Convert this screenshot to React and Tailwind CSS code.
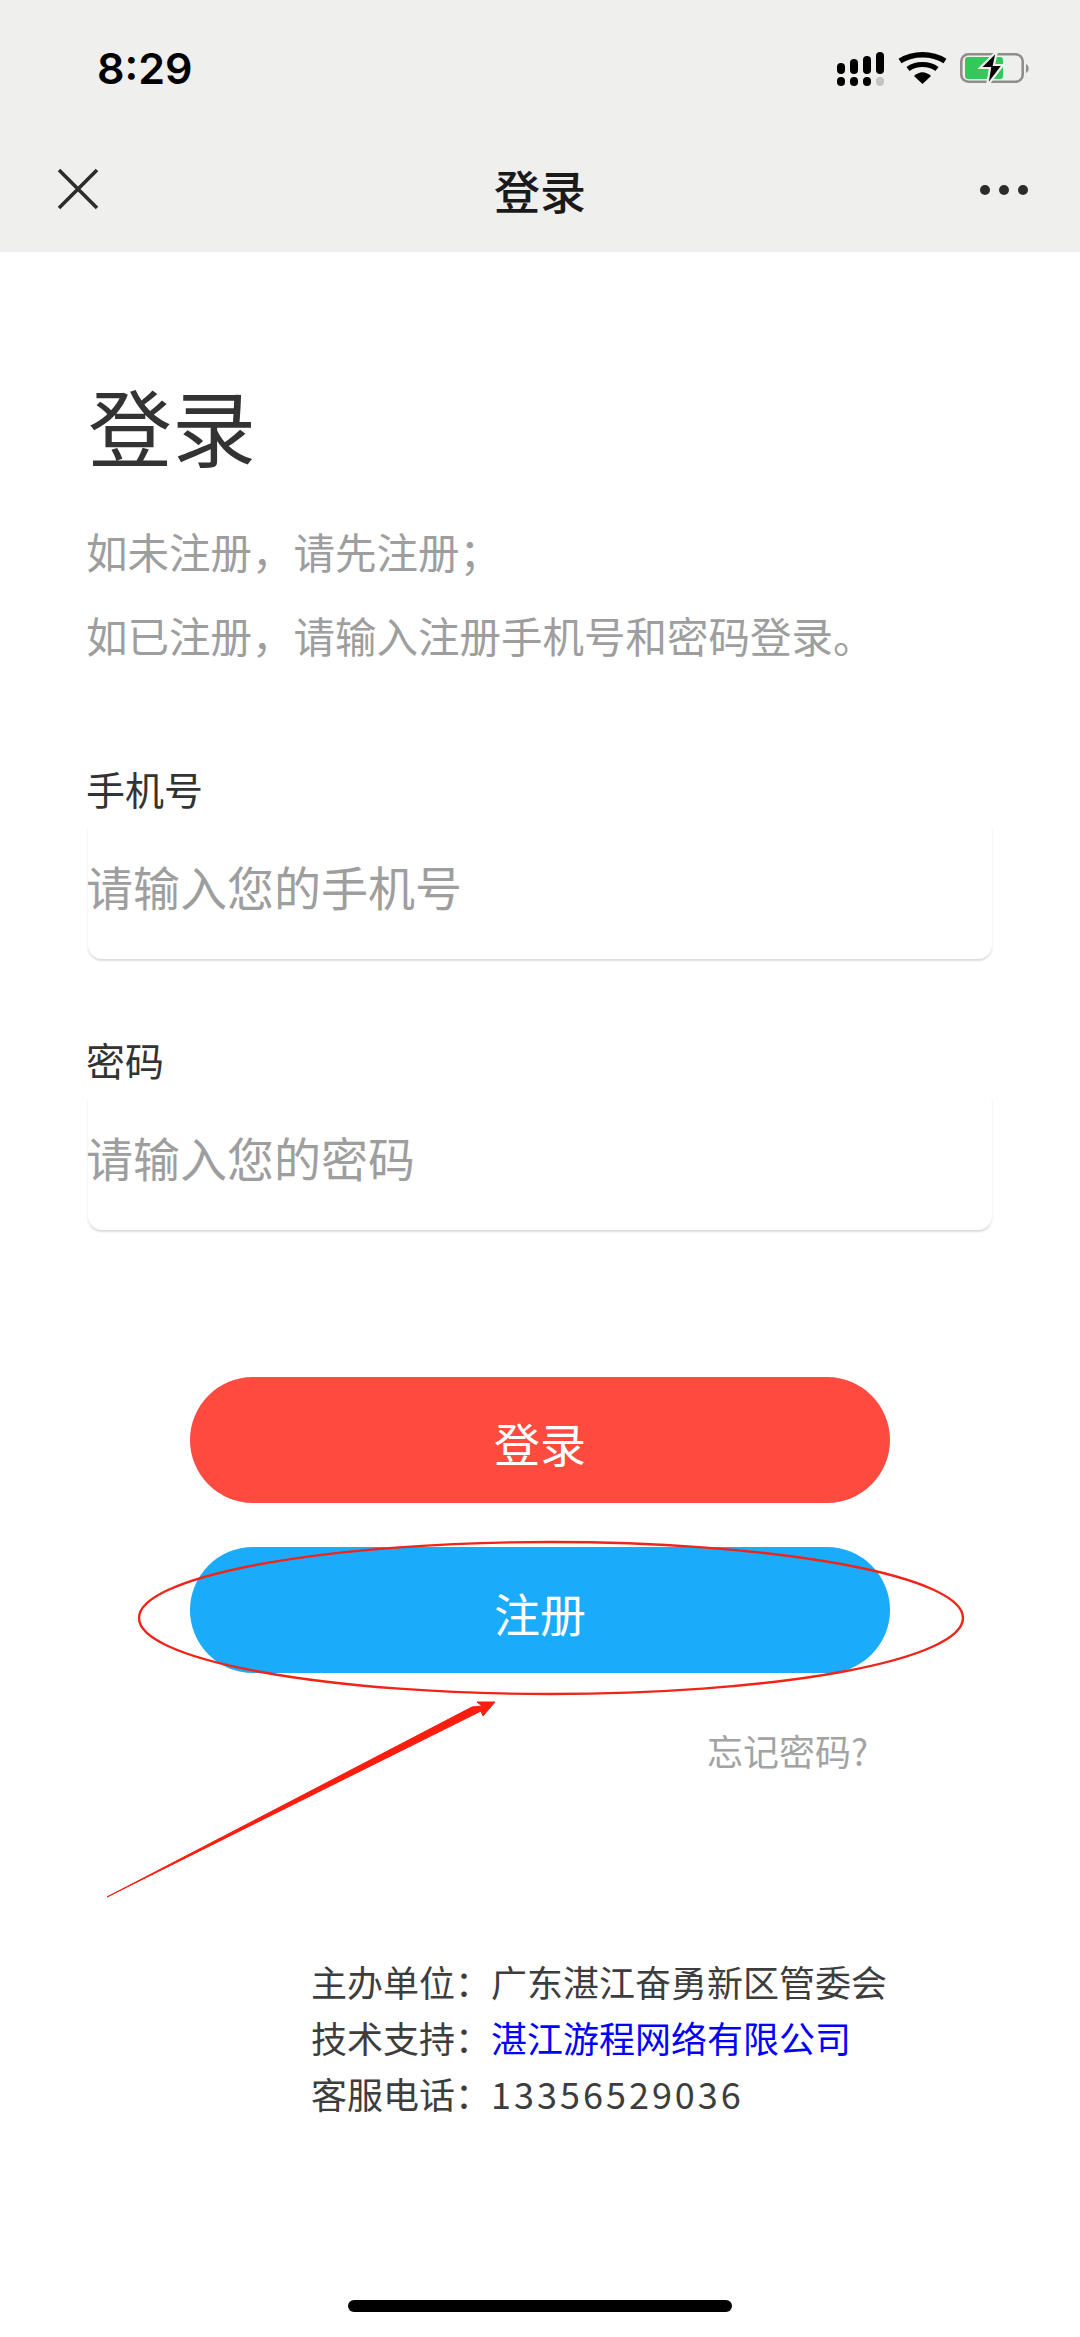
import React from 'react';

const cjk = { fontFamily: '"Noto Sans CJK SC", "Noto Sans", sans-serif' };

// status bar glyphs, cellular + wifi + charging battery
const StatusIcons = () => (
    <svg width="196" height="38" viewBox="0 0 196 38" className="block">
        <g fill="#000" transform="translate(0 3)">
            <rect x="0" y="11" width="8" height="11" rx="4" />
            <rect x="13" y="7" width="8" height="15" rx="4" />
            <rect x="26" y="4" width="8" height="18" rx="4" />
            <rect x="39" y="0" width="8" height="22" rx="4" />
            <rect x="0" y="25" width="8" height="9" rx="4" />
            <rect x="13" y="25" width="8" height="9" rx="4" />
            <rect x="26" y="25" width="8" height="9" rx="4" />
            <rect x="39" y="25" width="8" height="9" rx="4" fill="#c4c4c4" />
        </g>
        <path d="M63 12 C76 3.6 95 3.6 108 12" fill="none" stroke="#000" strokeWidth="5.4" />
        <path d="M71 20 C79 14 92 14 100 20" fill="none" stroke="#000" strokeWidth="5.2" />
        <path d="M77 27 C83 22 88 22 94 27 L85.5 35 Z" fill="#000" />
        <rect x="124.3" y="5.3" width="61.4" height="27.4" rx="7" fill="none" stroke="#8e8e8e" strokeWidth="2.6" />
        <path d="M189 15 C192.5 16.5 192.5 22.5 189 24 Z" fill="#8e8e8e" />
        <rect x="128" y="8" width="38" height="22" rx="3" fill="#34c759" />
        <path d="M160 2 L143 19 L153 19 L150 37 L166 16 L157 16 Z" fill="#000" stroke="#efefee" strokeWidth="2.2" />
    </svg>
);

const Field = ({ label, placeholder, className }) => (
    <div className={className}>
        <div className="-ml-[2px] text-[39px] leading-[50px] text-[#333]">{label}</div>
        <div className="mt-[4px] flex h-[142px] items-center rounded-[14px] bg-white pb-[4px] text-[47px] text-[#9e9e9e] shadow-[0_2px_2px_rgba(0,0,0,0.14)]">
            <span className="-ml-[2px]">{placeholder}</span>
        </div>
    </div>
);

export default function App() {
    return (
        <div className="relative flex h-[2337px] w-[1080px] flex-col overflow-hidden bg-white" style={cjk}>
            {/* wechat header */}
            <header className="h-[252px] shrink-0 bg-[#efefee]">
                <div className="flex h-[136px] items-center justify-between pl-[97px] pr-[47px]">
                    <span className="text-[43px] font-semibold leading-none text-black" style={{ fontFamily: 'Inter, sans-serif' }}>8:29</span>
                    <StatusIcons />
                </div>
                <div className="grid h-[106px] grid-cols-3 items-center px-[52px]">
                    <svg className="ml-[5px]" width="42" height="42" viewBox="0 0 42 42">
                        <path d="M2 2 L40 40 M40 2 L2 40" stroke="#2c2c2c" strokeWidth="3.6" fill="none" />
                    </svg>
                    <span className="text-center text-[46px] font-medium leading-none text-[#1a1a1a]">登录</span>
                    <div className="flex justify-end gap-[9px] pt-[2px]">
                        <span className="h-[10px] w-[10px] rounded-full bg-[#2c2c2c]" />
                        <span className="h-[10px] w-[10px] rounded-full bg-[#2c2c2c]" />
                        <span className="h-[10px] w-[10px] rounded-full bg-[#2c2c2c]" />
                    </div>
                </div>
            </header>

            <main className="px-[88px]">
                <h1 className="pt-[123px] text-[84px] font-normal leading-[100px] text-[#333]">登录</h1>
                <div className="-ml-[2px] mt-[34px] text-[41.5px] leading-[84px] text-[#9e9e9e]">
                    <p>如未注册，请先注册；</p>
                    <p>如已注册，请输入注册手机号和密码登录。</p>
                </div>

                <Field className="mt-[86px]" label="手机号" placeholder="请输入您的手机号" />
                <Field className="mt-[75px]" label="密码" placeholder="请输入您的密码" />

                <div className="mt-[147px] flex flex-col items-center gap-[44px]">
                    <button className="h-[126px] w-[700px] rounded-[63px] bg-[#ff4a40] pt-[4px] text-[46px] text-white">登录</button>
                    <button className="h-[126px] w-[700px] rounded-[63px] bg-[#1aabfb] pt-[4px] text-[46px] text-white">注册</button>
                </div>

                <div className="mt-[52px] pr-[124px] text-right text-[36px] leading-[50px] text-[#a3a3a3]">忘记密码?</div>

                <div className="mt-[178px] pl-[223px] text-[36px] leading-[56px] text-[#3d3d3d]">
                    <p>主办单位：广东湛江奋勇新区管委会</p>
                    <p>技术支持：<span className="text-[#0000ff]">湛江游程网络有限公司</span></p>
                    <p>客服电话：<span className="tracking-[3px]">13356529036</span></p>
                </div>
            </main>

            <div className="mb-[25px] mt-auto h-[12px] w-[384px] shrink-0 self-center rounded-full bg-black" />

            {/* red annotation drawn over the screenshot */}
            <svg className="pointer-events-none absolute left-0 top-0" width="1080" height="2337" viewBox="0 0 1080 2337">
                <ellipse cx="551" cy="1618" rx="412" ry="76" fill="none" stroke="#f02418" strokeWidth="2.4" />
                <path d="M107 1897 L472 1707 L482 1706 L477 1702 L495 1702 L483 1716 L481 1711 Z" fill="#fb1d0e" stroke="#fb1d0e" strokeWidth="1" strokeLinejoin="round" />
            </svg>
        </div>
    );
}
